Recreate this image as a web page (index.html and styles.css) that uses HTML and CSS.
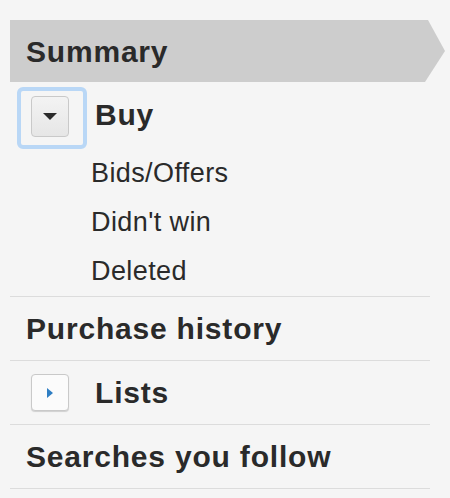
FILE: index.html
```html
<!DOCTYPE html>
<html lang="en">
	<head>
		<meta charset="utf-8">
		<title>My eBay</title>
		<link rel="stylesheet" href="styles.css">
	</head>
	<body>
		<nav class="sidebar">
			<a class="summary">Summary</a>
			<div class="group">
				<div class="group-head">
					<span class="focus-ring">
						<button class="toggle">
							<svg width="14" height="7" viewBox="0 0 14 7"><path d="M0 0H14L7 7Z" fill="#2b2b2b"/></svg>
						</button>
					</span>
					<span class="group-title">Buy</span>
				</div>
				<ul class="sub">
					<li>Bids/Offers</li>
					<li>Didn't win</li>
					<li>Deleted</li>
				</ul>
			</div>
			<a class="item">Purchase history</a>
			<div class="item item-toggle">
				<span class="focus-ring idle">
					<button class="toggle light">
						<svg width="6" height="10" viewBox="0 0 6 10"><path d="M0 0L6 5L0 10Z" fill="#2f7ec3"/></svg>
					</button>
				</span>
				<span class="group-title">Lists</span>
			</div>
			<a class="item">Searches you follow</a>
		</nav>
	</body>
</html>
```

FILE: styles.css
```css
*{
	margin: 0;
	padding: 0;
	box-sizing: border-box;
}
body{
	background: #f5f5f5;
	font-family: "Liberation Sans", Arial, sans-serif;
	color: #2a2a2a;
}
.sidebar{
	display: flex;
	flex-direction: column;
	padding: 20px 0 0 10px;
	width: 445px;
}
/* 当前选中项 带箭头 */
.summary{
	display: block;
	height: 62px;
	line-height: 64px;
	padding-left: 16px;
	font-size: 30px;
	font-weight: bold;
	letter-spacing: 0.8px;
	background: #cdcdcd;
	clip-path: polygon(0 0, 418px 0, 100% 50%, 415px 100%, 0 100%);
}
.group-head{
	display: flex;
	align-items: center;
	margin-top: 5px;
	padding-left: 7px;
}
.focus-ring{
	display: flex;
	border: 4px solid #b9d7f6;
	border-radius: 6px;
	padding: 5px 14px 8px 10px;
}
.focus-ring.idle{
	border-color: transparent;
	padding: 0 14px 0 10px;
}
.toggle{
	display: flex;
	align-items: center;
	justify-content: center;
	width: 38px;
	height: 41px;
	border: 1px solid #c9c9c9;
	border-radius: 4px;
	background: linear-gradient(#f3f3f3, #e6e6e6);
}
.toggle.light{
	height: 37px;
	background: #fbfbfb;
	box-shadow: 0 1px 1px #d0d0d0;
}
.group-title{
	margin-left: 8px;
	font-size: 30px;
	font-weight: bold;
	letter-spacing: 0.8px;
	padding-bottom: 7px;
}
.sub{
	list-style: none;
	padding-left: 81px;
	font-size: 27px;
	letter-spacing: 0.4px;
	line-height: 49px;
	border-bottom: 1px solid #dcdcdc;
	width: 420px;
}
.item{
	display: flex;
	align-items: center;
	width: 420px;
	height: 64px;
	padding-left: 16px;
	font-size: 30px;
	font-weight: bold;
	letter-spacing: 0.8px;
	border-bottom: 1px solid #dcdcdc;
}
.item-toggle{
	padding-left: 7px;
}
.item-toggle .group-title{
	padding-bottom: 0;
}
```
